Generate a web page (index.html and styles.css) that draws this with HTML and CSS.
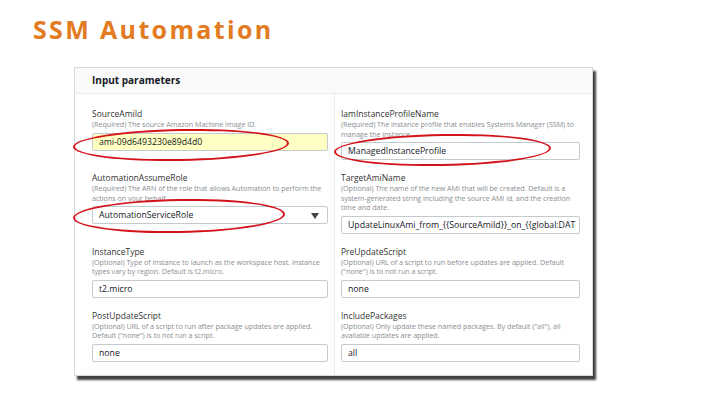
FILE: index.html
```html
<!DOCTYPE html>
<html>
<head>
<meta charset="utf-8">
<link rel="stylesheet" href="styles.css">
</head>
<body>
<div class="slide">
  <h1 class="title">SSM Automation</h1>
  <section class="panel">
    <header class="panel-head">Input parameters</header>
    <div class="grid">
      <div class="cell left first">
        <div class="label">SourceAmiId</div>
        <div class="desc">(Required) The source Amazon Machine Image ID.</div>
        <div class="input hl">ami-09d6493230e89d4d0</div>
      </div>
      <div class="cell right first">
        <div class="label">IamInstanceProfileName</div>
        <div class="desc">(Required) The instance profile that enables Systems Manager (SSM) to manage the instance.</div>
        <div class="input">ManagedInstanceProfile</div>
      </div>
      <div class="cell left">
        <div class="label">AutomationAssumeRole</div>
        <div class="desc">(Required) The ARN of the role that allows Automation to perform the actions on your behalf.</div>
        <div class="input select">AutomationServiceRole
          <svg class="caret" width="8" height="6" viewBox="0 0 8 6"><path d="M0 0 H8 L4 6 Z" fill="#444"/></svg>
        </div>
      </div>
      <div class="cell right">
        <div class="label">TargetAmiName</div>
        <div class="desc">(Optional) The name of the new AMI that will be created. Default is a system-generated string including the source AMI id, and the creation time and date.</div>
        <div class="input">UpdateLinuxAmi_from_{{SourceAmiId}}_on_{{global:DAT</div>
      </div>
      <div class="cell left">
        <div class="label">InstanceType</div>
        <div class="desc">(Optional) Type of instance to launch as the workspace host. Instance types vary by region. Default is t2.micro.</div>
        <div class="input">t2.micro</div>
      </div>
      <div class="cell right">
        <div class="label">PreUpdateScript</div>
        <div class="desc">(Optional) URL of a script to run before updates are applied. Default ("none") is to not run a script.</div>
        <div class="input">none</div>
      </div>
      <div class="cell left last">
        <div class="label">PostUpdateScript</div>
        <div class="desc">(Optional) URL of a script to run after package updates are applied. Default ("none") is to not run a script.</div>
        <div class="input">none</div>
      </div>
      <div class="cell right last">
        <div class="label">IncludePackages</div>
        <div class="desc">(Optional) Only update these named packages. By default ("all"), all available updates are applied.</div>
        <div class="input">all</div>
      </div>
    </div>
  </section>
  <div class="ring ring-1"></div>
  <div class="ring ring-2"></div>
  <div class="ring ring-3"></div>
</div>
</body>
</html>
```

FILE: styles.css
```css
html, body {
  margin: 0;
  padding: 0;
  background: #ffffff;
}

.slide {
  position: relative;
  width: 720px;
  height: 405px;
  overflow: hidden;
  font-family: "Open Sans", "DejaVu Sans", sans-serif;
}

.title {
  margin: 0;
  padding: 14px 0 0 33px;
  height: 67px;
  box-sizing: border-box;
  font-size: 25px;
  line-height: 30px;
  font-weight: 700;
  letter-spacing: 2.35px;
  color: #e27b22;
}

.panel {
  margin-left: 74px;
  width: 519px;
  box-sizing: border-box;
  border: 1px solid #d5dbdb;
  background: #ffffff;
  box-shadow: 3px 4px 2px rgba(0, 0, 0, 0.75);
}

.panel-head {
  height: 25px;
  padding-left: 17px;
  font-size: 10px;
  line-height: 25px;
  font-weight: 700;
  color: #16191f;
  background: #fafafa;
  border-bottom: 1px solid #eaeded;
}

.grid {
  display: grid;
  grid-template-columns: 260px 257px;
}

.cell {
  padding-top: 12px;
  display: flex;
  flex-direction: column;
  min-width: 0;
}

.cell.first {
  padding-top: 14px;
}

.cell.last {
  padding-bottom: 13px;
}

.left {
  padding-left: 17px;
  padding-right: 6px;
  border-right: 1px solid #eaeded;
}

.right {
  padding-left: 6px;
  padding-right: 12px;
}

.label {
  font-size: 8.5px;
  line-height: 12px;
  color: #333;
}

.desc {
  font-size: 7.2px;
  line-height: 9.5px;
  letter-spacing: -0.05px;
  color: #8a8f94;
}

.input {
  margin-top: 3px;
  height: 18px;
  box-sizing: border-box;
  border: 1px solid #c4cbcc;
  border-radius: 2px;
  padding-left: 6px;
  font-size: 8.7px;
  line-height: 16px;
  font-weight: 500;
  color: #16191f;
  background: #ffffff;
  white-space: nowrap;
  overflow: hidden;
}

.input.hl {
  background: #ffffc4;
}

.select {
  position: relative;
}

.caret {
  position: absolute;
  right: 8px;
  top: 6px;
}

.ring {
  position: absolute;
  border: 2px solid #d4141c;
  border-radius: 50%;
  box-sizing: border-box;
}

.ring-1 {
  left: 73px;
  top: 129px;
  width: 216px;
  height: 32px;
  transform: rotate(-1deg);
}

.ring-2 {
  left: 334px;
  top: 134px;
  width: 217px;
  height: 32px;
  transform: rotate(-1deg);
}

.ring-3 {
  left: 73px;
  top: 199px;
  width: 212px;
  height: 34px;
  transform: rotate(-1deg);
}
```
